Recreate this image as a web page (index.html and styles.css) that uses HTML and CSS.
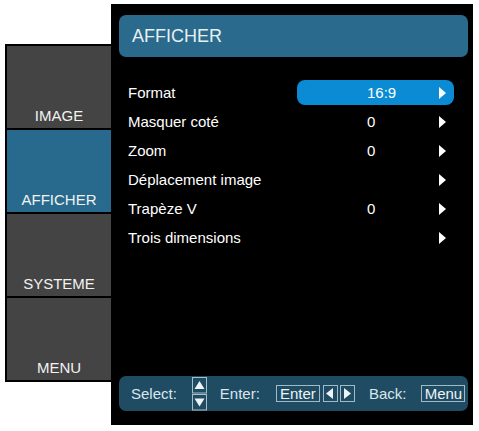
FILE: index.html
```html
<!DOCTYPE html>
<html lang="fr">
<head>
<meta charset="utf-8">
<title>AFFICHER</title>
<link rel="stylesheet" href="styles.css">
</head>
<body>
<div class="osd">
  <nav class="sidebar">
    <div class="tab"><span>IMAGE</span></div>
    <div class="tab active"><span>AFFICHER</span></div>
    <div class="tab"><span>SYSTEME</span></div>
    <div class="tab"><span>MENU</span></div>
  </nav>
  <main class="panel">
    <header class="title">AFFICHER</header>
    <ul class="list">
      <li class="row selected"><span class="label">Format</span><span class="val"><span class="num">16:9</span><i class="arrow"></i></span></li>
      <li class="row"><span class="label">Masquer coté</span><span class="val"><span class="num">0</span><i class="arrow"></i></span></li>
      <li class="row"><span class="label">Zoom</span><span class="val"><span class="num">0</span><i class="arrow"></i></span></li>
      <li class="row"><span class="label">Déplacement image</span><span class="val"><span class="num"></span><i class="arrow"></i></span></li>
      <li class="row"><span class="label">Trapèze V</span><span class="val"><span class="num">0</span><i class="arrow"></i></span></li>
      <li class="row"><span class="label">Trois dimensions</span><span class="val"><span class="num"></span><i class="arrow"></i></span></li>
    </ul>
    <footer class="help">
      <span class="hl">Select:</span>
      <svg class="updown" width="15" height="34" viewBox="0 0 15 34">
        <rect x="0.5" y="0.5" width="14" height="15.5" fill="none" stroke="#a7bfcb"/>
        <polygon points="2.5,12 12.5,12 7.5,4" fill="#eef3f6"/>
        <rect x="0.5" y="17.5" width="14" height="15.5" fill="none" stroke="#a7bfcb"/>
        <polygon points="2.5,21.5 12.5,21.5 7.5,29.5" fill="#eef3f6"/>
      </svg>
      <span class="hl enter">Enter:</span>
      <span class="key kenter">Enter</span>
      <span class="key karrow"><svg width="8" height="11" viewBox="0 0 8 11"><polygon points="7,0 7,11 0,5.5" fill="#eef3f6"/></svg></span>
      <span class="key karrow kright"><svg width="8" height="11" viewBox="0 0 8 11"><polygon points="1,0 1,11 8,5.5" fill="#eef3f6"/></svg></span>
      <span class="hl back">Back:</span>
      <span class="key kmenu">Menu</span>
    </footer>
  </main>
</div>
</body>
</html>
```

FILE: styles.css
```css
* { box-sizing: border-box; }
html, body { margin: 0; padding: 0; background: #ffffff; }
body { font-family: "Liberation Sans", Arial, sans-serif; }

.osd {
  display: flex;
  align-items: flex-start;
  padding-left: 5px;
}

.sidebar {
  margin-top: 44px;
  width: 106px;
  background: #000;
  padding: 2px 0 2px 2px;
  display: flex;
  flex-direction: column;
  gap: 2px;
}
.tab {
  height: 82px;
  background: #444444;
  color: #f2f2f2;
  font-size: 15px;
  line-height: 18px;
  display: flex;
  align-items: flex-end;
  justify-content: center;
  padding-bottom: 3px;
}
.tab.active { background: #286a8e; }

.panel {
  margin-top: 4px;
  width: 362px;
  height: 421px;
  background: #000;
  display: flex;
  flex-direction: column;
  padding: 11px 5px 14px 8px;
}

.title {
  height: 42px;
  flex: none;
  background: #2a6a8c;
  border-radius: 7px;
  color: #e8eff3;
  font-size: 18px;
  display: flex;
  align-items: center;
  padding-left: 13px;
}

.list {
  list-style: none;
  margin: 21px 0 0 0;
  padding: 0;
}
.row {
  height: 29px;
  display: flex;
  align-items: center;
  color: #ffffff;
  font-size: 15px;
}
.label {
  flex: none;
  width: 169px;
  margin-left: 9px;
}
.val {
  flex: none;
  width: 157px;
  height: 25px;
  border-radius: 8px;
  display: flex;
  align-items: center;
  padding-left: 70px;
}
.selected .val { background: #0a8bd3; }
.num { flex: none; width: 50px; }
.arrow {
  display: block;
  width: 0;
  height: 0;
  margin-left: auto;
  margin-right: 8px;
  border-left: 7px solid #ffffff;
  border-top: 6px solid transparent;
  border-bottom: 6px solid transparent;
}

.help {
  margin-top: auto;
  height: 35px;
  flex: none;
  background: #1f4c63;
  border-radius: 7px;
  display: flex;
  align-items: center;
  padding-left: 12px;
  color: #dbe6ec;
  font-size: 15px;
}
.updown { display: block; margin-left: 15px; }
.enter { margin-left: 13px; }
.key {
  height: 17px;
  border: 1px solid #a0bac7;
  display: flex;
  align-items: center;
  justify-content: center;
  color: #eef3f6;
  font-size: 15px;
  line-height: 15px;
}
.kenter { width: 44px; margin-left: 16px; }
.karrow { width: 15px; margin-left: 3px; }
.kright { margin-left: 2px; }
.back { margin-left: 14px; }
.kmenu { width: 44px; margin-left: 15px; }
```
